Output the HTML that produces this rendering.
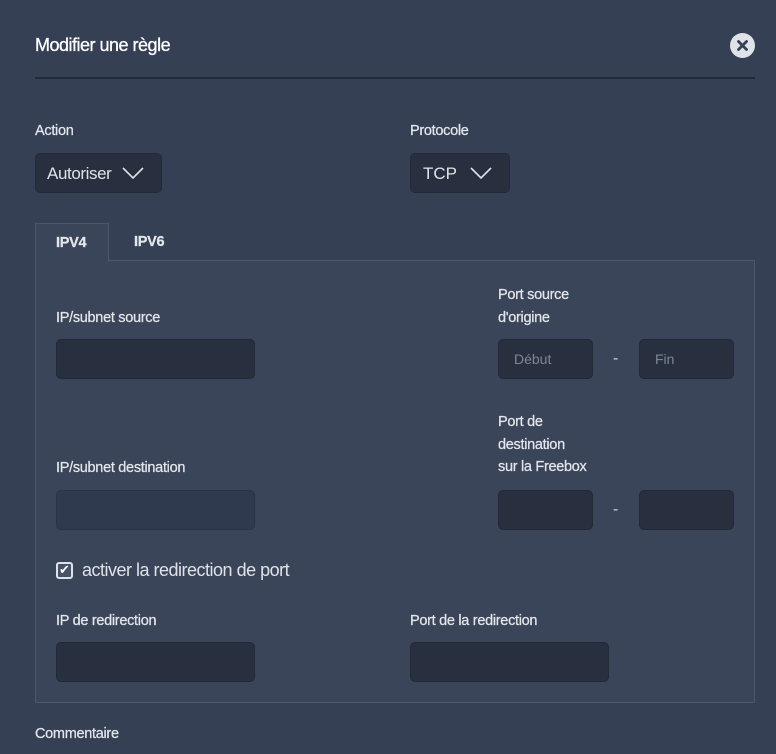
<!DOCTYPE html>
<html><head><meta charset="utf-8"><style>
*{margin:0;padding:0;box-sizing:border-box}
body{width:776px;height:754px;background:#354055;font-family:"Liberation Sans",sans-serif;color:#e6e8ec;position:relative;overflow:hidden}
.a{position:absolute;white-space:nowrap}
.t{font-size:14.5px;color:#e3e6ea;letter-spacing:-0.3px;-webkit-text-stroke:0.25px #e3e6ea}
.in{position:absolute;height:40px;background:#283040;border:1px solid #222a38;border-radius:5px}
.ph{font-size:14px;color:#7e8796;position:absolute;top:11px}
</style></head><body>
<div class="a" style="left:35px;top:35px;font-size:18px;color:#fff;letter-spacing:-0.5px;-webkit-text-stroke:0.3px #fff">Modifier une règle</div>
<div class="a" style="left:730px;top:33px;width:25px;height:25px;border-radius:50%;background:#dfe3e8"></div>
<svg class="a" style="left:730px;top:33px" width="25" height="25"><path d="M8.5 8.5 L16.5 16.5 M16.5 8.5 L8.5 16.5" stroke="#354055" stroke-width="2.8" stroke-linecap="round"/></svg>
<div class="a" style="left:35px;top:77px;width:720px;height:2px;background:#232b3a"></div>

<div class="a t" style="left:35px;top:123px">Action</div>
<div class="a t" style="left:410px;top:123px">Protocole</div>
<div class="in" style="left:35px;top:153px;width:127px"></div>
<div class="a" style="left:47px;top:164px;font-size:17px;color:#dfe3e8;letter-spacing:-0.4px">Autoriser</div>
<svg class="a" style="left:122px;top:166px" width="22" height="14"><path d="M1 2 L11 12 L21 2" stroke="#dfe3e8" stroke-width="1.6" fill="none"/></svg>
<div class="in" style="left:410px;top:153px;width:100px"></div>
<div class="a" style="left:423px;top:164px;font-size:17px;color:#dfe3e8">TCP</div>
<svg class="a" style="left:470px;top:166px" width="22" height="14"><path d="M1 2 L11 12 L21 2" stroke="#dfe3e8" stroke-width="1.6" fill="none"/></svg>

<div class="a" style="left:35px;top:260px;width:720px;height:443px;background:#3a4559;border:1px solid #4c576a"></div>
<div class="a" style="left:35px;top:223px;width:74px;height:39px;background:#3a4559;border:1px solid #4c576a;border-bottom:none"></div>
<div class="a t" style="left:56px;top:235px;font-weight:bold">IPV4</div>
<div class="a t" style="left:134px;top:234px;font-weight:bold">IPV6</div>

<div class="a t" style="left:56px;top:310px">IP/subnet source</div>
<div class="in" style="left:56px;top:339px;width:199px"></div>
<div class="a t" style="left:498px;top:284px;line-height:23px">Port source<br>d'origine</div>
<div class="in" style="left:498px;top:339px;width:95px"><span class="ph" style="left:15px">Début</span></div>
<div class="a" style="left:613px;top:350px;color:#cfd3da">-</div>
<div class="in" style="left:639px;top:339px;width:95px"><span class="ph" style="left:15px">Fin</span></div>

<div class="a t" style="left:56px;top:460px">IP/subnet destination</div>
<div class="in" style="left:56px;top:490px;width:199px;background:#2f3a4f;border-color:#2a3446"></div>
<div class="a t" style="left:498px;top:411px;line-height:22.5px">Port de<br>destination<br>sur la Freebox</div>
<div class="in" style="left:498px;top:490px;width:95px"></div>
<div class="a" style="left:613px;top:501px;color:#cfd3da">-</div>
<div class="in" style="left:639px;top:490px;width:95px"></div>

<div class="a" style="left:56px;top:562px;width:17px;height:17px;border:2px solid #dfe3e8;border-radius:3px;background:#46516a"></div>
<div class="a" style="left:59px;top:562px;font-size:13px;color:#fff">✔</div>
<div class="a" style="left:82px;top:560px;font-size:18px;color:#dfe3e8;letter-spacing:-0.5px">activer la redirection de port</div>

<div class="a t" style="left:56px;top:613px">IP de redirection</div>
<div class="in" style="left:56px;top:642px;width:199px"></div>
<div class="a t" style="left:410px;top:613px">Port de la redirection</div>
<div class="in" style="left:410px;top:642px;width:199px"></div>

<div class="a t" style="left:35px;top:726px">Commentaire</div>
</body></html>
